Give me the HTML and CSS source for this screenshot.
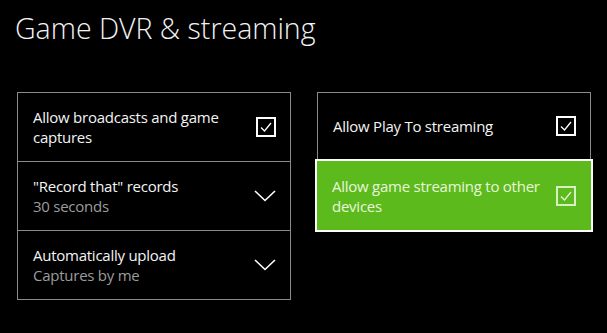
FILE: index.html
```html
<!DOCTYPE html>
<html lang="en">

<head>
    <meta charset="UTF-8">
    <title>Game DVR &amp; streaming</title>
    <link rel="stylesheet" href="styles.css">
</head>

<body>
    <h1>Game DVR &amp; streaming</h1>

    <div class="columns">
        <div class="panel">
            <div class="row">
                <div class="label">Allow broadcasts and game captures</div>
                <span class="check">
                    <svg width="16" height="16" viewBox="0 0 16 16"><path d="M3 8.5 L6.5 12 L13 4" fill="none" stroke="#fff" stroke-width="1.3"/></svg>
                </span>
            </div>
            <div class="row">
                <div class="label">"Record that" records
                    <div class="sub">30 seconds</div>
                </div>
                <svg class="chevron" width="22" height="12" viewBox="0 0 22 12"><path d="M1 1 L11 10.5 L21 1" fill="none" stroke="#fff" stroke-width="1.6"/></svg>
            </div>
            <div class="row">
                <div class="label">Automatically upload
                    <div class="sub">Captures by me</div>
                </div>
                <svg class="chevron" width="22" height="12" viewBox="0 0 22 12"><path d="M1 1 L11 10.5 L21 1" fill="none" stroke="#fff" stroke-width="1.6"/></svg>
            </div>
        </div>

        <div class="panel right">
            <div class="row short">
                <div class="label">Allow Play To streaming</div>
                <span class="check">
                    <svg width="16" height="16" viewBox="0 0 16 16"><path d="M3 8.5 L6.5 12 L13 4" fill="none" stroke="#fff" stroke-width="1.3"/></svg>
                </span>
            </div>
            <div class="row focused">
                <div class="label">Allow game streaming to other devices</div>
                <span class="check">
                    <svg width="16" height="16" viewBox="0 0 16 16"><path d="M3 8.5 L6.5 12 L13 4" fill="none" stroke="#e4f3d6" stroke-width="1.3"/></svg>
                </span>
            </div>
        </div>
    </div>
</body>

</html>
```

FILE: styles.css
```css
body {
    margin: 0;
    background-color: #000;
    color: #fff;
    font-family: "Open Sans", sans-serif;
    width: 607px;
    height: 333px;
    overflow: hidden;
}

h1 {
    margin: 0;
    padding: 8px 0 0 15px;
    font-size: 28.5px;
    font-weight: 300;
    line-height: 40px;
    color: #f2f2f2;
}

.columns {
    display: flex;
    gap: 26px;
    padding: 44px 0 0 17px;
}

.panel {
    width: 274px;
    border: 1px solid #8a8a8a;
    box-sizing: border-box;
}

.panel.right {
    border: none;
}

.row {
    display: flex;
    align-items: center;
    justify-content: space-between;
    height: 69px;
    padding: 0 14px 0 15px;
    box-sizing: border-box;
    border-top: 1px solid #8a8a8a;
    font-size: 15px;
    letter-spacing: -0.25px;
    line-height: 20px;
}

.row:first-child {
    border-top: none;
    height: 68px;
}

.label {
    width: 215px;
    color: #f4f4f4;
}

.sub {
    color: #9c9c9c;
}

.check {
    width: 20px;
    height: 20px;
    border: 2px solid #fff;
    box-sizing: border-box;
    display: flex;
    align-items: center;
    justify-content: center;
}

.row.short {
    height: 67px;
    border: 1px solid #8a8a8a;
    border-bottom: none;
}

.row.focused {
    height: 73px;
    margin: 0 -2px;
    padding: 0 15px 0 15px;
    background-color: #5cba1d;
    border: 2px solid #fff;
}

.focused .label {
    color: #e8f6dc;
}

.focused .check {
    border-color: #d8efc4;
}
```
